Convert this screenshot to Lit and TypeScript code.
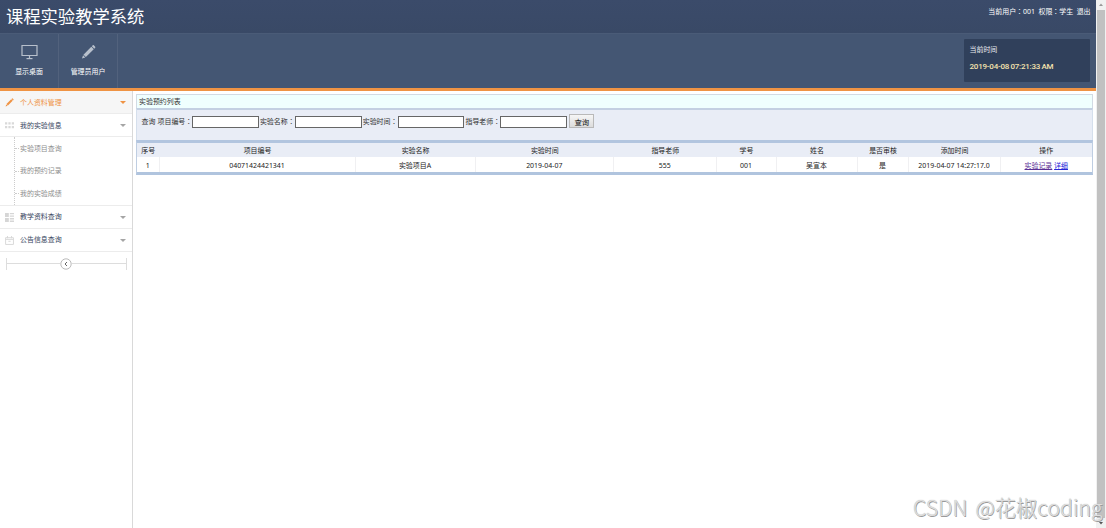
import { LitElement, html, css, svg, nothing } from "lit";
import { customElement } from "lit/decorators.js";

const pencil = (cls: string) => html`<svg class=${cls} viewBox="0 0 16 16">
  <path d="M1 15 L2.2 11.4 L4.6 13.8 Z M2.6 10.8 L11 2.4 L13.6 5 L5.2 13.4 Z M11.6 1.8 L12.5 .9 Q13.1 .4 13.7 .9 L15.1 2.3 Q15.6 2.9 15.1 3.5 L14.2 4.4 Z" fill="currentColor"/>
</svg>`;

const glyphs = {
  dots: svg`<path d="M0 1h2v2H0zM3 1h2v2H3zM6 1h2v2H6zM0 4.5h2v2H0zM3 4.5h2v2H3zM6 4.5h2v2H6z" fill="#d9d9d9"/>`,
  blocks: svg`<path d="M0 0h3.4v3.5H0zM4.3 0H8v1.2H4.3zM4.3 2.2H8v1.2H4.3zM0 4.5h3.4V8H0zM4.3 4.5H8v1.2H4.3zM4.3 6.7H8V8H4.3z" fill="#d6d6d6"/>`,
  box: svg`<path d="M.5 1.5h7v6h-7zM.5 3h7M2.2 0v2M5.8 0v2M3 4.7h2" fill="none" stroke="#d6d6d6" stroke-width=".8"/>`,
};

const columns = ["序号", "项目编号", "实验名称", "实验时间", "指导老师", "学号", "姓名", "是否审核", "添加时间", "操作"];
const record = ["1", "04071424421341", "实验项目A", "2019-04-07", "555", "001", "吴宣本", "是", "2019-04-07 14:27:17.0"];
const filters = ["项目编号", "实验名称", "实验时间", "指导老师"];
const colon = html`<span class="colon">：</span>`;

@customElement("app-root")
export class AppRoot extends LitElement {
  static styles = css`
    :host {
      display: grid;
      grid-template-columns: 1096px 10px;
      position: relative;
      width: 1106px;
      height: 528px;
      overflow: hidden;
      background: #fff;
      color: #333;
      font: 6.95px/10px "Noto Sans", "Noto Sans CJK SC", sans-serif;
      white-space: nowrap;
    }
    * { box-sizing: border-box; }
    svg { display: block; flex: none; }
    .colon { font-family: "Noto Sans CJK TC", sans-serif; line-height: 1; }
    .page { display: flex; flex-direction: column; }
    .top {
      height: 34px; display: flex; justify-content: space-between;
      padding: 0 5.5px 0 6px; color: #fff;
      background: linear-gradient(#3b4b6a, #394966);
      border-bottom: 1px solid #4a5b77;
    }
    .title { margin: 0; font: 400 17.3px/31px "Noto Sans CJK SC", sans-serif; }
    .user { display: flex; gap: 3.5px; padding-top: 7px; line-height: 9px; height: 17px; }
    .tools { height: 54px; display: flex; background: #445673; }
    .tool {
      height: 54px; width: 59px; display: flex; flex-direction: column; align-items: center;
      color: #fff; border-right: 1px solid #52627d; padding-top: 10px;
    }
    .tool svg { width: 17px; height: 16px; color: #b8c0cc; }
    .tool .pen { width: 15px; height: 16px; }
    .tool span { margin-top: 7px; }
    .clock {
      margin: 5px 6px 0 auto; width: 126px; height: 43px; padding: 6px 5.5px 0;
      background: #30405b; border-radius: 1px; color: #e8ebef;
    }
    .now { margin-top: 7px; color: #f5e3ae; font: 500 8px/10px Roboto, sans-serif; letter-spacing: -.22px; word-spacing: -.5px; }
    .rule { height: 3px; background: #ef9344; }
    .body { flex: 1; display: flex; }
    .side { width: 133px; border-right: 1px solid #d9d9d9; }
    .item {
      height: 23px; display: flex; align-items: center; padding: 1px 6px 0 5px;
      border-bottom: 1px solid #ececec; color: #35435c;
    }
    .item.active { background: #f6f6f6; color: #ef9344; }
    .item svg { width: 9px; height: 9px; margin-right: 6px; }
    .arrow { margin-left: auto; border: 3px solid transparent; border-top-color: #a5a5a5; border-bottom: 0; }
    .active .arrow { border-top-color: #ef9344; }
    .sub { height: 68px; margin-left: 14px; border-left: 1px dotted #ccc; color: #8d8d8d; }
    .subwrap { border-bottom: 1px solid #ececec; height: 68.5px; padding-bottom: 1px; }
    .sub div { height: 22.6px; display: flex; align-items: center; gap: 1px; padding-top: 1px; }
    .sub div::before { content: ""; width: 4px; border-top: 1px dotted #ccc; }
    .collapse { display: flex; align-items: center; margin: 5.5px 5px 0 5.5px; height: 13px; }
    .collapse i { flex: 1; height: 12px; display: flex; align-items: center; border-left: 1px solid #ddd; }
    .collapse i::before { content: ""; flex: 1; border-top: 1px solid #ddd; }
    .collapse i:last-child { border-left: 0; border-right: 1px solid #ddd; }
    .collapse svg { width: 12px; height: 12px; }
    .main { padding: 3px 3px 0; width: 963px; }
    .caption {
      height: 14px; padding-left: 2px; line-height: 13px; width: 957px;
      background: #effffe; border: 1px solid #d2dbe4; border-bottom: 0;
    }
    .search {
      height: 32px; width: 957px; display: flex; align-items: flex-start; padding: 4px 0 0 4.5px;
      background: #e9edf6; border: 1px solid #d5dfec; border-top: 2px solid #c3d0e2; border-bottom: 0;
    }
    .search > span { line-height: 14px; margin-top: 1px; height: 14px; }
    .search .lead { margin-right: 2px; width: 14px; }
    .label { width: 35px; }
    .search .field { width: 66.8px; height: 12px; margin: 1.5px 1px 0 0; padding: 0; border: 1px solid #666; background: #fff; outline: none; border-radius: 0; }
    .search .label:nth-of-type(2) { width: 34.6px; }
    .go {
      width: 25px; height: 14px; margin-left: 1px; padding: 0; border: 1px solid #b9b9b9; border-radius: 0;
      background: linear-gradient(#f6f6f6, #dcdcdc); color: #111; font: 7.4px/11px "Noto Sans CJK SC", sans-serif;
    }
    .grid {
      width: 957px; border: 1px solid #bfcee2; border-width: 3px 1px; border-top-color: #b2c5df; border-bottom-color: #b0c4de;
    }
    .row {
      display: grid; height: 14px; line-height: 15px; text-align: center; color: #222;
      grid-template-columns: 22.5px 196px 120px 138.5px 102.5px 60px 81px 51px 92px 1fr;
    }
    .head { background: #e9edf6; }
    .data { height: 15px; line-height: 17px; }
    .data > span { border-right: 1px solid #f0f0f2; height: 15px; }
    .data > span:last-child { border-right: 0; }
    .link { color: #2525d8; text-decoration: underline; }
    .visited { color: #5b2f95; }
    .scroll { display: flex; flex-direction: column; align-items: center; background: #f1f1f1; }
    .scroll svg { width: 10px; height: 10px; }
    .thumb { flex: 1; width: 8px; background: #c1c1c1; }
    .mark {
      position: absolute; left: 913px; top: 491px; display: flex; gap: 8px;
      font: 300 21.2px/32px "Noto Sans CJK SC", sans-serif; color: #dedede;
      text-shadow: 0 0 1px #aaa, .7px .7px .5px #999;
    }
    .mark span { letter-spacing: .05px; }
  `;

  private menu(label: string, icon: unknown, active = false) {
    return html`<div class="item ${active ? "active" : ""}">${icon}<span>${label}</span><span class="arrow"></span></div>`;
  }

  private glyph(name: keyof typeof glyphs) {
    return html`<svg viewBox="0 0 8 8">${glyphs[name]}</svg>`;
  }

  render() {
    return html`
      <div class="page">
        <header class="top">
          <h1 class="title">课程实验教学系统</h1>
          <div class="user"><span>当前用户${colon}001</span><span>权限${colon}学生</span><span>退出</span></div>
        </header>
        <div class="tools">
          <div class="tool">
            <svg viewBox="0 0 17 16"><path d="M1 1.5h15v10H1zM8.5 12v2" fill="none" stroke="currentColor" stroke-width="1.2"/><path d="M5.5 14h6v1.2h-6z" fill="currentColor"/></svg>
            <span>显示桌面</span>
          </div>
          <div class="tool">${pencil("pen")}<span>管理员用户</span></div>
          <div class="clock"><div>当前时间</div><div class="now">2019-04-08 07:21:33 AM</div></div>
        </div>
        <div class="rule"></div>
        <div class="body">
          <nav class="side">
            ${this.menu("个人资料管理", pencil(""), true)}
            ${this.menu("我的实验信息", this.glyph("dots"))}
            <div class="subwrap"><div class="sub"><div>实验项目查询</div><div>我的预约记录</div><div>我的实验成绩</div></div></div>
            ${this.menu("教学资料查询", this.glyph("blocks"))}
            ${this.menu("公告信息查询", this.glyph("box"))}
            <div class="collapse"><i></i><svg viewBox="0 0 12 12"><circle cx="6" cy="6" r="5.2" fill="#fff" stroke="#aaa" stroke-width=".8"/><path d="M7 4L5 6l2 2" fill="none" stroke="#666"/></svg><i></i></div>
          </nav>
          <main class="main">
            <div class="caption">实验预约列表</div>
            <div class="search">
              <span class="lead">查询</span>
              ${filters.map((f) => html`<span class="label">${f}${colon}</span><input class="field" />`)}
              <button class="go">查询</button>
            </div>
            <div class="grid">
              <div class="row head">${columns.map((c) => html`<span>${c}</span>`)}</div>
              <div class="row data">
                ${record.map((v) => html`<span>${v || nothing}</span>`)}
                <span><a class="link visited">实验记录</a> <a class="link">详细</a></span>
              </div>
            </div>
          </main>
        </div>
      </div>
      <div class="scroll">
        <svg viewBox="0 0 10 10"><path d="M3 6l2-2.4L7 6z" fill="#999"/></svg>
        <div class="thumb"></div>
        <svg viewBox="0 0 10 10"><path d="M3 4l2 2.4L7 4z" fill="#555"/></svg>
      </div>
      <div class="mark"><span>CSDN</span><span>@花椒coding</span></div>
    `;
  }
}
